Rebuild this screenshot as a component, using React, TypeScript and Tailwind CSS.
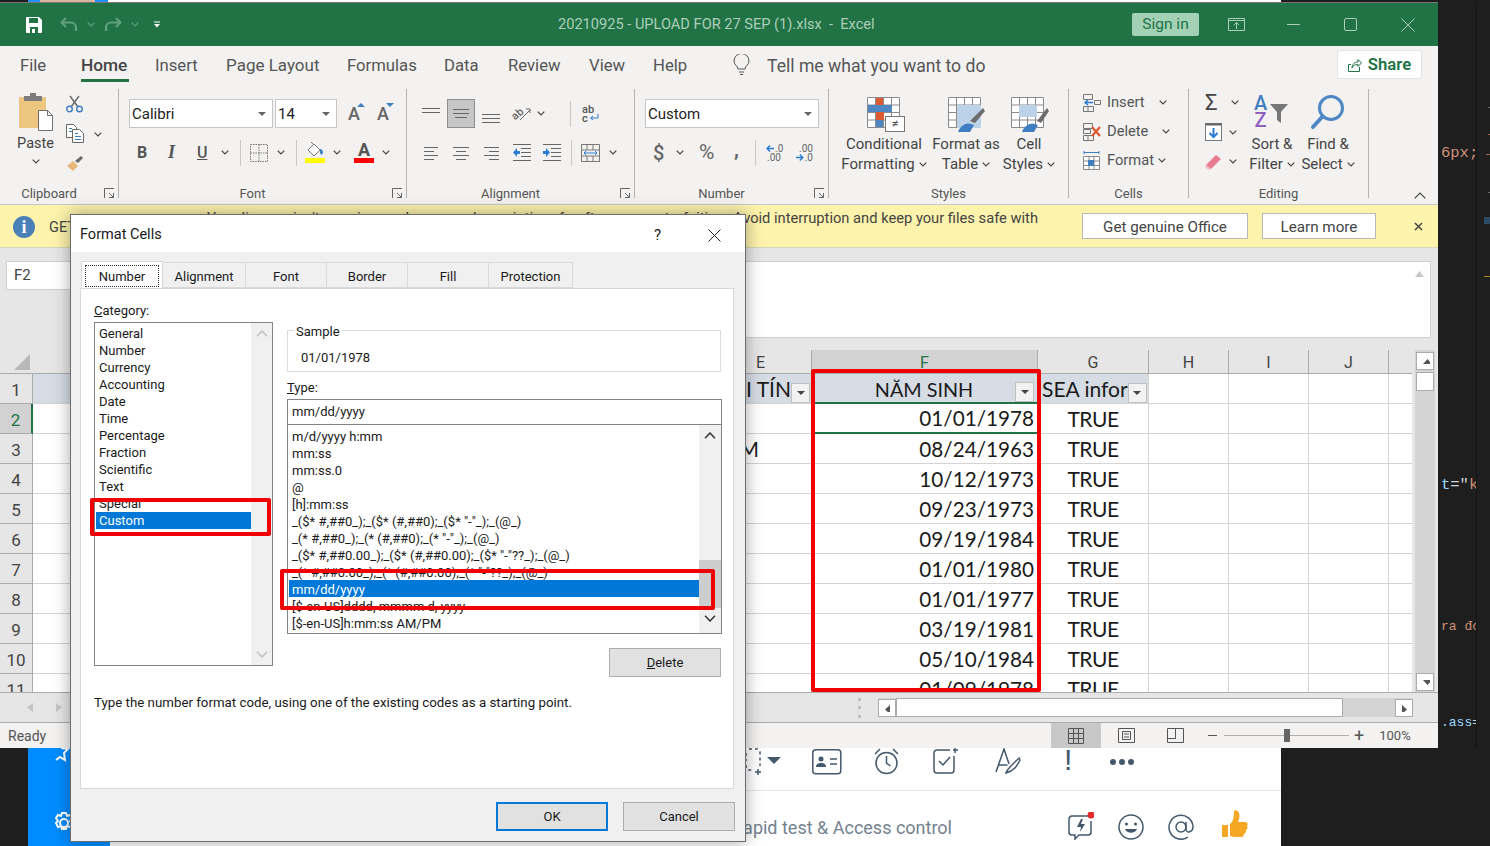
import type { ReactNode } from "react";

const categories = ["General", "Number", "Currency", "Accounting", "Date", "Time", "Percentage", "Fraction", "Scientific", "Text", "Special", "Custom"];

const formats = [
	"m/d/yyyy h:mm",
	"mm:ss",
	"mm:ss.0",
	"@",
	"[h]:mm:ss",
	'_($* #,##0_);_($* (#,##0);_($* "-"_);_(@_)',
	'_(* #,##0_);_(* (#,##0);_(* "-"_);_(@_)',
	'_($* #,##0.00_);_($* (#,##0.00);_($* "-"??_);_(@_)',
	'_(* #,##0.00_);_(* (#,##0.00);_(* "-"??_);_(@_)',
	"mm/dd/yyyy",
	"[$-en-US]dddd, mmmm d, yyyy",
	"[$-en-US]h:mm:ss AM/PM",
];

const dates = ["01/01/1978", "08/24/1963", "10/12/1973", "09/23/1973", "09/19/1984", "01/01/1980", "01/01/1977", "03/19/1981", "05/10/1984", "01/09/1978"];

function Chev(props: { className?: string; color?: string }) {
	return (
		<svg width="8" height="5" viewBox="0 0 8 5" className={`shrink-0 ${props.className ?? ""}`}>
			<path d="M.7.7 4 4 7.3.7" fill="none" stroke={props.color ?? "#444"} strokeWidth="1.2" />
		</svg>
	);
}

function Caret() {
	return (
		<svg width="8" height="4" viewBox="0 0 8 4" className="shrink-0">
			<path d="M0 0h8L4 4z" fill="#666" />
		</svg>
	);
}

function Launcher() {
	return (
		<svg width="11" height="11" viewBox="0 0 11 11" className="absolute right-[3px] top-[5px]">
			<path d="M.5 10V.5H10M5 5l4.500 4.500M9.500 5v4.500H5" fill="none" stroke="#666" />
		</svg>
	);
}

function Sep() {
	return <div className="mt-px h-[109px] w-px shrink-0 bg-[#b4b4b4]" />;
}

function MiniSep(props: { className?: string }) {
	return <div className={`h-[26px] w-px shrink-0 bg-[#c8c8c8] ${props.className ?? ""}`} />;
}

function Group(props: { width: string; label: string; launcher?: boolean; children: ReactNode }) {
	return (
		<div className={`flex shrink-0 flex-col ${props.width}`}>
			<div className="h-[95px]">{props.children}</div>
			<div className={`relative flex h-[21px] items-center justify-center text-[13px] text-[#555] ${props.launcher ? "pr-[20px]" : ""}`}>
				{props.label}
				{props.launcher ? <Launcher /> : null}
			</div>
		</div>
	);
}

function Lines(props: { rows: [number, number, number][]; w?: number; h?: number; color?: string }) {
	return (
		<svg width={props.w ?? 18} height={props.h ?? 18} className="shrink-0">
			{props.rows.map(([x1, x2, y]) => (
				<path key={`${x1}${y}`} d={`M${x1} ${y + 0.5}H${x2}`} stroke={props.color ?? "#666"} />
			))}
		</svg>
	);
}

function Select(props: { text: string; width: string; className?: string }) {
	return (
		<div className={`flex h-[29px] items-center justify-between border border-[#c6c6c6] bg-white pl-[2px] pr-[6px] text-[15px] text-[#222] ${props.width} ${props.className ?? ""}`}>
			<span className="pt-px">{props.text}</span>
			<Caret />
		</div>
	);
}

function Indent(props: { flip?: boolean }) {
	return (
		<svg width="18" height="17" viewBox="0 0 18 17" className="shrink-0">
			<path d="M0 .5h18M8 4.500h10M8 8.500h10M8 12.500h10M0 16.500h18" stroke="#666" />
			<path d={props.flip ? "M0 7h3V4l4 4.500-4 4.500v-3H0z" : "M7 7H4V4L0 8.500 4 13v-3h3z"} fill="#2b7cd3" />
		</svg>
	);
}

function GridIcon(props: { children?: ReactNode; width: number; height: number; className?: string }) {
	return (
		<svg width={props.width} height={props.height} viewBox={`0 0 ${props.width} ${props.height}`} className={`shrink-0 ${props.className ?? ""}`}>
			{props.children}
		</svg>
	);
}

function Clipboard() {
	return (
		<Group width="w-[118px]" label="Clipboard" launcher>
			<div className="flex">
				<div className="ml-[18px] flex w-[35px] flex-col items-center">
					<svg width="36" height="40" viewBox="0 0 36 40" className="mt-[4px] shrink-0">
						<rect x="1" y="5" width="27" height="31" fill="#edc67f" />
						<path d="M6 9V4h6V1h6v3h6v5z" fill="#7d7d7d" />
						<path d="M20.500 18.500h9l5 5v15h-14z" fill="#fff" stroke="#707070" />
						<path d="M29.500 18.500v5h5" fill="none" stroke="#707070" />
					</svg>
					<span className="mt-[2px] h-[20px] text-[14.5px] leading-[20px] text-[#444]">Paste</span>
					<Chev className="mt-[5px]" />
				</div>
				<div className="ml-[13px] flex flex-col">
					<svg width="17" height="18" viewBox="0 0 17 18" className="mt-[7px]">
						<path d="M4 1l8 11M13 1 5 12" stroke="#666" strokeWidth="1.4" />
						<circle cx="3.500" cy="14" r="2.800" fill="none" stroke="#3f7fc1" strokeWidth="1.4" />
						<circle cx="13.500" cy="14" r="2.800" fill="none" stroke="#3f7fc1" strokeWidth="1.4" />
					</svg>
					<div className="mt-[11px] flex items-center">
						<svg width="18" height="19" viewBox="0 0 18 19">
							<path d="M.5.5h7l3 3v10H.5z" fill="#fff" stroke="#666" />
							<path d="M6.500 5.500h7l4 4v9h-11z" fill="#fff" stroke="#666" />
							<path d="M9 9.500h3M9 12.500h6M9 15.500h6M3 4.500h3M3 7.500h3" stroke="#3f7fc1" />
						</svg>
						<Chev className="ml-[10px] mt-[1px]" />
					</div>
					<svg width="18" height="17" viewBox="0 0 18 17" className="mt-[12px]">
						<path d="M1 11l6-5 5 5-5 5z" fill="#e9b878" />
						<path d="M9 6l6-5 2 2-5 5z" fill="#6b6b6b" />
					</svg>
				</div>
			</div>
		</Group>
	);
}

function FontGroup() {
	return (
		<Group width="w-[287px]" label="Font" launcher>
			<div className="ml-[10px] mt-[11px] flex items-center">
				<Select text="Calibri" width="w-[144px]" />
				<Select text="14" width="w-[62px]" className="ml-[2px]" />
				<span className="relative ml-[11px] w-[14px] text-[18px] font-medium leading-none text-[#666]">
					A<span className="absolute right-[-3px] top-[-2px] h-0 w-0 border-x-[4px] border-b-[4px] border-x-transparent border-b-[#3f7fc1]" />
				</span>
				<span className="relative ml-[15px] w-[14px] text-[18px] font-medium leading-none text-[#666]">
					A<span className="absolute right-[-3px] top-[-2px] h-0 w-0 border-x-[4px] border-t-[4px] border-x-transparent border-t-[#3f7fc1]" />
				</span>
			</div>
			<div className="mt-[12px] flex h-[25px] items-center text-[#555]">
				<span className="ml-[18px] w-[10px] text-[16px] font-bold">B</span>
				<span className="ml-[21px] w-[10px] font-['Liberation_Serif',serif] text-[18px] font-bold italic">I</span>
				<span className="ml-[19px] w-[11px] text-[16px] font-medium underline">U</span>
				<Chev className="ml-[13px]" />
				<MiniSep className="ml-[11px]" />
				<svg width="18" height="18" viewBox="0 0 18 18" className="ml-[9px] shrink-0">
					<path d="M.5.5h17v17H.5zM9 .5v17M.5 9h17" fill="none" stroke="#777" strokeDasharray="1.500 1" />
				</svg>
				<Chev className="ml-[9px]" />
				<MiniSep className="ml-[11px]" />
				<div className="ml-[8px] flex w-[20px] flex-col items-center">
					<svg width="18" height="16" viewBox="0 0 18 16">
						<path d="M2 8l6-6 6 6-6 6z" fill="#fff" stroke="#777" />
						<path d="M5 0l3 3" stroke="#777" />
						<path d="M14 7c2 0 3 2 3 4l-1.500 2L14 11z" fill="#3f7fc1" />
					</svg>
					<div className="h-[5px] w-[20px] bg-[#ffff00]" />
				</div>
				<Chev className="ml-[8px]" />
				<div className="ml-[13px] flex w-[20px] flex-col items-center">
					<span className="h-[16px] text-[18px] font-bold leading-[16px] text-[#555]">A</span>
					<div className="h-[5px] w-[20px] bg-[#ff0000]" />
				</div>
				<Chev className="ml-[8px]" />
			</div>
		</Group>
	);
}

function Alignment() {
	return (
		<Group width="w-[227px]" label="Alignment" launcher>
			<div className="mt-[11px] flex h-[29px] items-center">
				<div className="ml-[15px]">
					<Lines rows={[[0, 18, 3], [0, 18, 7]]} h={18} />
				</div>
				<div className="ml-[7px] flex h-[29px] w-[28px] items-center justify-center border border-[#8f8f8f] bg-[#c6c6c6]">
					<Lines rows={[[1, 17, 4], [1, 17, 8], [3, 15, 12]]} />
				</div>
				<div className="ml-[7px] mt-[6px]">
					<Lines rows={[[0, 18, 6], [0, 18, 10], [0, 18, 14]]} />
				</div>
				<svg width="19" height="17" viewBox="0 0 19 17" className="ml-[12px] shrink-0">
					<text x="0" y="13" fontSize="11" fontWeight="500" fill="#666" transform="rotate(-40 5 10)">ab</text>
					<path d="M8 15 18 5M14 4h4v4" fill="none" stroke="#666" />
				</svg>
				<Chev className="ml-[6px]" />
				<MiniSep className="ml-[25px]" />
				<div className="ml-[11px] flex w-[18px] flex-col text-[11px] font-medium leading-[9px] text-[#555]">
					<span>ab</span>
					<span className="flex items-center">
						c
						<svg width="10" height="8" viewBox="0 0 10 8" className="ml-[1px]">
							<path d="M9 0v4H2M4 2 1.500 4 4 6" fill="none" stroke="#2b7cd3" />
						</svg>
					</span>
				</div>
			</div>
			<div className="mt-[12px] flex h-[25px] items-center">
				<div className="ml-[17px] w-[14px]">
					<Lines rows={[[0, 14, 2], [0, 10, 6], [0, 14, 10], [0, 10, 14]]} w={14} h={16} />
				</div>
				<div className="ml-[15px] w-[16px]">
					<Lines rows={[[0, 16, 2], [3, 13, 6], [0, 16, 10], [3, 13, 14]]} w={16} h={16} />
				</div>
				<div className="ml-[15px] w-[15px]">
					<Lines rows={[[0, 15, 2], [5, 15, 6], [0, 15, 10], [5, 15, 14]]} w={15} h={16} />
				</div>
				<div className="ml-[14px]">
					<Indent />
				</div>
				<div className="ml-[12px]">
					<Indent flip />
				</div>
				<MiniSep className="ml-[10px]" />
				<svg width="19" height="18" viewBox="0 0 19 18" className="ml-[9px] shrink-0">
					<path d="M.5.5h18v17H.5zM.5 6h18M.5 12h18M6 .5V6M12 .5V6M6 12v5.500M12 12v5.500" fill="none" stroke="#777" />
					<path d="M3 9h13M5 7 3 9l2 2M14 7l2 2-2 2" fill="none" stroke="#2b7cd3" />
				</svg>
				<Chev className="ml-[9px]" />
			</div>
		</Group>
	);
}

function NumberGroup() {
	return (
		<Group width="w-[193px]" label="Number" launcher>
			<Select text="Custom" width="w-[174px]" className="ml-[10px] mt-[11px]" />
			<div className="mt-[12px] flex h-[25px] items-center text-[#666]">
				<span className="ml-[18px] w-[12px] text-[20px] font-medium leading-none">$</span>
				<Chev className="ml-[11px]" />
				<span className="ml-[15px] w-[17px] text-[21px] leading-none">%</span>
				<span className="ml-[18px] mt-[-8px] w-[7px] text-[20px] font-bold leading-[14px]">,</span>
				<MiniSep className="ml-[14px]" />
				<div className="ml-[10px] w-[19px] text-[10px] leading-[9px]">
					<div className="flex items-center">
						<svg width="9" height="7" viewBox="0 0 9 7">
							<path d="M8 3.500H1M4 .5 1 3.500l3 3" fill="none" stroke="#2b7cd3" strokeWidth="1.500" />
						</svg>
						<span>.0</span>
					</div>
					<div className="pl-[1px]">.00</div>
				</div>
				<div className="ml-[11px] w-[17px] text-[10px] leading-[9px]">
					<div className="pl-[3px]">.00</div>
					<div className="flex items-center">
						<svg width="9" height="7" viewBox="0 0 9 7">
							<path d="M0 3.500h7M4 .5l3 3-3 3" fill="none" stroke="#2b7cd3" strokeWidth="1.500" />
						</svg>
						<span>.0</span>
					</div>
				</div>
			</div>
		</Group>
	);
}

function BigLabel(props: { top: string; bottom: string; className?: string; children: ReactNode }) {
	return (
		<div className={`flex flex-col items-center text-[15px] leading-[20px] text-[#444] ${props.className ?? ""}`}>
			<div className="flex h-[46px] items-start justify-center pt-[9px]">{props.children}</div>
			<span>{props.top}</span>
			<span className="flex items-center gap-[4px] whitespace-nowrap">
				{props.bottom}
				<Chev />
			</span>
		</div>
	);
}

function SheetGrid() {
	return <path d="M.5.5h32v30H.5zM.5 8h32M.5 15.500h32M.5 23h32M8.500.5v30M16.500.5v30M24.500.5v30" fill="#fff" stroke="#8a8a8a" />;
}

function Styles() {
	return (
		<Group width="w-[239px]" label="Styles">
			<div className="ml-[7px] flex">
				<BigLabel top="Conditional" bottom="Formatting" className="w-[96px]">
					<GridIcon width={38} height={36} className="ml-[3px]">
						<SheetGrid />
						<rect x="9" y="1" width="7" height="7" fill="#dc5a32" />
						<rect x="1" y="8" width="24" height="7" fill="#4e87c4" />
						<rect x="9" y="15" width="8" height="8" fill="#dc5a32" />
						<rect x="9" y="23" width="7" height="7" fill="#4e87c4" />
						<rect x="18.500" y="19.500" width="19" height="15" fill="#fff" stroke="#777" />
						<text x="28" y="31" fontSize="13" textAnchor="middle" fill="#444">≠</text>
					</GridIcon>
				</BigLabel>
				<BigLabel top="Format as" bottom="Table" className="w-[68px]">
					<GridIcon width={38} height={36} className="ml-[2px]">
						<SheetGrid />
						<rect x="9" y="8" width="24" height="23" fill="#bcd2e8" />
						<path d="M22 24 35 11l2 3-10 12z" fill="#6d6d6d" />
						<path d="M10 35c2-6 8-10 13-8l3 1-4 7z" fill="#3f7fc1" />
					</GridIcon>
				</BigLabel>
				<BigLabel top="Cell" bottom="Styles" className="w-[58px]">
					<GridIcon width={38} height={36} className="ml-[1px]">
						<SheetGrid />
						<rect x="8" y="8" width="18" height="12" fill="#bcd2e8" />
						<path d="M26 24 36 11l2 3-8 12z" fill="#6d6d6d" />
						<path d="M11 35c2-6 8-10 13-8l3 1-4 7z" fill="#3f7fc1" />
					</GridIcon>
				</BigLabel>
			</div>
		</Group>
	);
}

function CellRow(props: { label: string; chevGap: string; icon: ReactNode }) {
	return (
		<div className="flex h-[29px] items-center pl-[14px] text-[14.7px] text-[#555]">
			{props.icon}
			<span className="ml-[6px]">{props.label}</span>
			<Chev className={props.chevGap} />
		</div>
	);
}

function Cells() {
	return (
		<Group width="w-[119px]" label="Cells">
			<CellRow
				label="Insert"
				chevGap="ml-[14px]"
				icon={
					<svg width="18" height="18" viewBox="0 0 18 18">
						<path d="M.5.5h9v5h-9zM.5 12.500h10v5H.5zM5 12.500v5M11.500 6.500h6v4h-6z" fill="none" stroke="#777" />
						<path d="M10 8.500H2M5 6 2 8.500 5 11" fill="none" stroke="#2b7cd3" strokeWidth="1.500" />
					</svg>
				}
			/>
			<CellRow
				label="Delete"
				chevGap="ml-[14px]"
				icon={
					<svg width="18" height="18" viewBox="0 0 18 18">
						<path d="M.5.5h9v5h-9zM.5 12.500h10v5H.5zM5 12.500v5M.5 6.500h7v4h-7z" fill="none" stroke="#777" />
						<path d="m9 4 8 9M17 4 9 13" stroke="#e0512a" strokeWidth="2" />
					</svg>
				}
			/>
			<CellRow
				label="Format"
				chevGap="ml-[4px]"
				icon={
					<svg width="18" height="20" viewBox="0 0 18 20">
						<path d="M1 1.500h15M1 0v3M16 0v3" stroke="#3f7fc1" />
						<path d="M.5 5.500h16v13H.5zM.5 10h16M.5 14.500h16M6 5.500v13M11 5.500v13" fill="#fff" stroke="#888" />
						<rect x="5" y="9" width="6" height="6" fill="#3f7fc1" />
					</svg>
				}
			/>
		</Group>
	);
}

function Editing() {
	return (
		<Group width="w-[179px]" label="Editing">
			<div className="flex">
				<div className="flex w-[60px] flex-col pl-[16px]">
					<div className="flex h-[29px] items-center">
						<span className="w-[17px] text-[22px] leading-none text-[#444]">Σ</span>
						<Chev className="ml-[9px]" />
					</div>
					<div className="flex h-[30px] items-center">
						<svg width="17" height="18" viewBox="0 0 17 18">
							<rect x=".5" y=".5" width="16" height="17" fill="#fff" stroke="#777" />
							<path d="M.5 1.500h16" stroke="#666" strokeWidth="2" />
							<path d="M8.500 5v9M4.500 10l4 4 4-4" fill="none" stroke="#2b7cd3" strokeWidth="2" />
						</svg>
						<Chev className="ml-[7px]" />
					</div>
					<div className="flex h-[29px] items-center">
						<svg width="17" height="16" viewBox="0 0 17 16">
							<path d="M1 11 11 1l5 4-10 10z" fill="#e97c92" />
							<path d="M1 11l5 4-2 1-4-3z" fill="#f3b7c3" />
						</svg>
						<Chev className="ml-[7px]" />
					</div>
				</div>
				<div className="w-[46px]">
					<BigLabel top="Sort &" bottom="Filter" className="w-[46px]">
						<svg width="36" height="33" viewBox="0 0 36 33" className="mt-[-2px]">
							<text x="6.500" y="15" fontSize="20" fontWeight="500" textAnchor="middle" fill="#3f7fc1">A</text>
							<text x="6.500" y="32" fontSize="20" fontWeight="500" textAnchor="middle" fill="#8f5fc0">Z</text>
							<path d="M16 9h18l-7 8v11l-4-3v-8z" fill="#777" />
						</svg>
					</BigLabel>
				</div>
				<div className="ml-[5px] w-[56px]">
					<BigLabel top="Find &" bottom="Select" className="w-[56px]">
						<svg width="36" height="36" viewBox="0 0 36 36" className="mt-[-3px]">
							<circle cx="21" cy="14" r="11.500" fill="none" stroke="#4e87c4" strokeWidth="3" />
							<path d="M12 23 3 33" stroke="#4e87c4" strokeWidth="4" strokeLinecap="round" />
						</svg>
					</BigLabel>
				</div>
			</div>
		</Group>
	);
}

function TitleBar() {
	return (
		<div className="flex h-[43px] shrink-0 items-center bg-[#217346]">
			<svg width="16" height="16" viewBox="0 0 16 16" className="ml-[26px] shrink-0">
				<path d="M1 0h12l3 3v12a1 1 0 0 1-1 1H1a1 1 0 0 1-1-1V1a1 1 0 0 1 1-1z" fill="#fff" />
				<path d="M3 1h9v5H3zM4 10h8v6H4z" fill="#217346" />
				<rect x="6" y="12" width="3" height="4" fill="#fff" />
			</svg>
			<svg width="18" height="15" viewBox="0 0 18 15" className="ml-[18px] shrink-0">
				<path d="M6 1 1.500 5.500 6 10M2 5.500h9a5 5 0 0 1 5 5V14" fill="none" stroke="#5f9f7d" strokeWidth="2.200" />
			</svg>
			<Chev className="ml-[9px]" color="#5f9f7d" />
			<svg width="18" height="15" viewBox="0 0 18 15" className="ml-[9px] shrink-0">
				<path d="M12 1l4.500 4.500L12 10M16 5.500H7a5 5 0 0 0-5 5V14" fill="none" stroke="#5f9f7d" strokeWidth="2.200" />
			</svg>
			<Chev className="ml-[9px]" color="#5f9f7d" />
			<svg width="6" height="7" viewBox="0 0 6 7" className="ml-[15px] shrink-0">
				<path d="M0 1h6" stroke="#fff" />
				<path d="M0 3h6L3 6.500z" fill="#fff" />
			</svg>
			<span className="ml-[398px] w-[574px] whitespace-pre text-[14.6px] text-[#a9cfb8]">20210925 - UPLOAD FOR 27 SEP (1).xlsx  -  Excel</span>
			<div className="flex h-[23px] w-[67px] items-center justify-center rounded-[2px] bg-[#a3d1b5] text-[15.5px] text-[#217346]">Sign in</div>
			<svg width="17" height="13" viewBox="0 0 17 13" className="ml-[29px] shrink-0">
				<path d="M.5.5h16v12H.5zM.5 2.500h16M8.500 11V5M6 7l2.500-2.500L11 7" fill="none" stroke="#a9cfb8" />
			</svg>
			<div className="ml-[42px] h-px w-[13px] bg-[#a9cfb8]" />
			<div className="ml-[44px] h-[13px] w-[13px] rounded-[2px] border border-[#a9cfb8]" />
			<svg width="14" height="14" viewBox="0 0 14 14" className="ml-[44px] shrink-0">
				<path d="m.5.5 13 13M13.500.5l-13 13" stroke="#a9cfb8" />
			</svg>
		</div>
	);
}

function TabRow() {
	return (
		<div className="flex h-[42px] shrink-0 items-start bg-[#f3f2f1] pt-[7px] text-[16.7px] text-[#555]">
			<span className="ml-[20px] w-[61px]">File</span>
			<span className="flex w-[74px] flex-col">
				<span className="w-[48px] whitespace-nowrap text-[17.3px] font-medium text-[#444]">Home</span>
				<span className="h-[3px] w-[48px] bg-[#217346]" />
			</span>
			<span className="w-[71px]">Insert</span>
			<span className="w-[121px] text-[17px]">Page Layout</span>
			<span className="w-[97px]">Formulas</span>
			<span className="w-[64px]">Data</span>
			<span className="w-[81px]">Review</span>
			<span className="w-[64px]">View</span>
			<span className="w-[80px]">Help</span>
			<svg width="17" height="22" viewBox="0 0 17 22" className="mt-[1px] shrink-0">
				<path d="M5 15c0-3-4-4-4-8a7.500 7.500 0 0 1 15 0c0 4-4 5-4 8zM6 18h5M7 20.500h3" fill="none" stroke="#555" />
			</svg>
			<span className="ml-[17px] w-[570px] text-[17.6px]">Tell me what you want to do</span>
			<div className="mt-[-3px] flex h-[29px] w-[85px] items-center justify-center gap-[6px] rounded-[2px] border border-[#e4e4e4] bg-white font-semibold text-[#217346]">
				<svg width="14" height="14" viewBox="0 0 14 14">
					<path d="M3 6.500H.5v7h11V9M4 10c0-4 3-6 6-6V1.500L13.500 5 10 8.500V6.500c-3 0-5 1-6 3.500z" fill="none" stroke="#217346" />
				</svg>
				Share
			</div>
		</div>
	);
}

function Ribbon() {
	return (
		<div className="flex h-[117px] shrink-0 border-b border-[#c8c8c8] bg-[#f3f2f1]">
			<Clipboard />
			<Sep />
			<FontGroup />
			<Sep />
			<Alignment />
			<Sep />
			<NumberGroup />
			<Sep />
			<Styles />
			<Sep />
			<Cells />
			<Sep />
			<Editing />
			<Sep />
			<svg width="12" height="7" viewBox="0 0 12 7" className="ml-[45px] mt-[104px] shrink-0">
				<path d="M.7 6.300 6 1l5.300 5.300" fill="none" stroke="#444" strokeWidth="1.200" />
			</svg>
		</div>
	);
}

function Banner() {
	return (
		<div className="flex h-[43px] shrink-0 items-start border-b border-[#d8d8b8] bg-[#fdf3ac] text-[15.2px] text-[#444]">
			<div className="ml-[13px] mt-[11px] flex h-[22px] w-[22px] shrink-0 items-center justify-center rounded-full bg-[#4a80b8] font-['Liberation_Serif',serif] text-[18px] font-bold text-white">i</div>
			<span className="ml-[14px] mt-[12px] w-[158px] shrink-0 text-[14.5px]">GET GENUINE OFFICE</span>
			<div className="mt-[2px] flex w-[831px] shrink-0 items-baseline justify-between whitespace-nowrap">
				<span>Your license isn't genuine, and you may be a victim of software counterfeiting. A</span>
				<span className="text-[14.7px]">void interruption and keep your files safe with</span>
			</div>
			<div className="ml-[44px] mt-[8px] flex h-[26px] w-[166px] shrink-0 items-center justify-center border border-[#b8b8b8] bg-white pt-[2px]">Get genuine Office</div>
			<div className="ml-[14px] mt-[8px] flex h-[26px] w-[114px] shrink-0 items-center justify-center border border-[#b8b8b8] bg-white pt-[2px]">Learn more</div>
			<svg width="9" height="9" viewBox="0 0 9 9" className="ml-[38px] mt-[17px] shrink-0">
				<path d="m1 1 7 7M8 1 1 8" stroke="#444" strokeWidth="1.500" />
			</svg>
		</div>
	);
}

function FormulaArea() {
	return (
		<div className="flex h-[102px] shrink-0 items-start bg-[#e6e6e6] pt-[13px]">
			<div className="ml-[6px] flex h-[29px] w-[200px] items-center border border-[#d0d0d0] bg-white pl-[7px] text-[15px] text-[#444]">F2</div>
			<div className="ml-[8px] flex h-[77px] w-[1217px] justify-end border border-[#d0d0d0] bg-white pr-[6px] pt-[9px]">
				<svg width="9" height="6" viewBox="0 0 9 6">
					<path d="M0 6 4.500 0 9 6z" fill="#c8c8c8" />
				</svg>
			</div>
		</div>
	);
}

function ColHeaders() {
	const cols: [string, string, string][] = [
		["E", "w-[102px]", ""],
		["F", "w-[226px]", "bg-[#d2d2d2] text-[#217346]"],
		["G", "w-[111px]", ""],
		["H", "w-[80px]", ""],
		["I", "w-[80px]", ""],
		["J", "w-[80px]", ""],
	];
	return (
		<div className="flex h-[24px] shrink-0 bg-[#e6e6e6]">
			<div className="flex h-[24px] w-[33px] items-end justify-end border-b border-[#ababab] pb-[3px] pr-[3px]">
				<div className="h-0 w-0 border-b-[16px] border-l-[16px] border-b-[#b8b8b8] border-l-transparent" />
			</div>
			<div className="w-[677px] border-b border-[#ababab]" />
			{cols.map(([name, width, extra]) => (
				<div key={name} className={`flex items-center justify-center border-b border-r border-[#ababab] pt-[3px] text-[16px] text-[#444] ${width} ${extra}`}>
					{name}
				</div>
			))}
			<div className="flex-1 border-b border-[#ababab]" />
		</div>
	);
}

function FilterBtn() {
	return (
		<div className="flex h-[20px] w-[19px] shrink-0 items-center justify-center self-end border border-[#c0c0c0] bg-[#f2f2f2]">
			<div className="h-0 w-0 border-x-[4px] border-t-[4px] border-x-transparent border-t-[#444]" />
		</div>
	);
}

function Rows() {
	const line = "border-b border-r border-[#d4d4d4]";
	return (
		<div className="h-[318px] w-full shrink-0 overflow-hidden bg-white font-['Lato',sans-serif] text-[#1a1a1a]">
			{Array.from({ length: 11 }, (_, i) => i + 1).map((n) => {
				const header = n === 1;
				const cellBg = header ? "bg-[#d6dce4]" : "";
				const date = dates[n - 2];
				const fBorder = n === 1 || n === 2 ? "border-b-2 border-b-[#217346]" : "";
				return (
					<div key={n} className="flex h-[30px]">
						<div className={`flex w-[33px] shrink-0 items-center justify-center border-b border-r border-[#ababab] pt-[5px] font-['Roboto',sans-serif] text-[17px] ${n === 2 ? "border-r-2 border-r-[#217346] bg-[#d2d2d2] text-[#217346]" : "bg-[#e6e6e6] text-[#444]"}`}>
							{n}
						</div>
						<div className={`w-[677px] shrink-0 ${line} ${cellBg}`} />
						<div className={`flex w-[102px] shrink-0 items-center justify-end overflow-hidden whitespace-nowrap pt-[1px] text-[21px] ${line} ${cellBg}`}>
							{header ? (
								<span className="flex h-full items-center">
									NGƯỜI TÍN
									<FilterBtn />
									<span className="w-px" />
								</span>
							) : n === 3 ? (
								<span className="pr-[52px]">TPHCM</span>
							) : null}
						</div>
						<div className={`flex w-[226px] shrink-0 items-center justify-end pr-[3px] pt-[2px] text-[20.7px] ${line} ${cellBg} ${fBorder}`}>
							{header ? (
								<>
									<span className="flex-1 whitespace-nowrap pl-[21px] pt-px text-center text-[19.800px]">NĂM SINH</span>
									<FilterBtn />
								</>
							) : (
								date
							)}
						</div>
						<div className={`flex w-[111px] shrink-0 items-center pt-px text-[21px] ${line} ${cellBg} ${header ? "" : "justify-center text-[20px] tracking-[-0.5px]"}`}>
							{header ? (
								<>
									<span className="whitespace-nowrap pl-[4px]">SEA infor</span>
									<FilterBtn />
								</>
							) : (
								"TRUE"
							)}
						</div>
						<div className={`w-[80px] shrink-0 ${line}`} />
						<div className={`w-[80px] shrink-0 ${line}`} />
						<div className={`w-[80px] shrink-0 ${line}`} />
						<div className="flex-1 border-b border-[#d4d4d4]" />
					</div>
				);
			})}
		</div>
	);
}

function ScrollBtn(props: { dir: "up" | "down" | "left" | "right"; className?: string }) {
	const d = { up: "M0 5 4.500 0 9 5z", down: "M0 0l4.500 5L9 0z", left: "M5 0 0 4.500 5 9z", right: "M0 0l5 4.500L0 9z" }[props.dir];
	return (
		<div className={`flex h-[18px] w-[18px] shrink-0 items-center justify-center border border-[#ababab] bg-white ${props.className ?? ""}`}>
			<svg width="9" height="9" viewBox="0 0 9 9">
				<path d={d} fill="#555" transform="translate(2 2)" />
			</svg>
		</div>
	);
}

function HScroll() {
	return (
		<div className="flex h-[30px] shrink-0 items-center border-t border-[#ababab] bg-[#e6e6e6]">
			<svg width="6" height="9" viewBox="0 0 6 9" className="ml-[27px] shrink-0">
				<path d="M6 0 0 4.500 6 9z" fill="#c4c4c4" />
			</svg>
			<svg width="6" height="9" viewBox="0 0 6 9" className="ml-[23px] shrink-0">
				<path d="M0 0l6 4.500L0 9z" fill="#c4c4c4" />
			</svg>
			<div className="ml-[796px] flex h-[20px] w-[3px] flex-col justify-between">
				<div className="h-[3px] bg-[#bdbdbd]" />
				<div className="h-[3px] bg-[#bdbdbd]" />
				<div className="h-[3px] bg-[#bdbdbd]" />
			</div>
			<div className="ml-[17px] flex h-[19px] w-[535px] items-center bg-[#d4d4d4]">
				<ScrollBtn dir="left" />
				<div className="h-[19px] w-[447px] border border-[#ababab] bg-white" />
				<div className="w-[52px]" />
				<ScrollBtn dir="right" />
			</div>
		</div>
	);
}

function StatusBar() {
	return (
		<div className="flex h-[26px] shrink-0 items-center border-t border-[#ababab] bg-[#f3f2f1] text-[14px] text-[#555]">
			<span className="ml-[8px] w-[1043px] pt-px">Ready</span>
			<div className="flex h-[25px] w-[50px] items-center justify-center bg-[#c8c8c8]">
				<svg width="16" height="16" viewBox="0 0 16 16">
					<path d="M.5.5h15v15H.5zM5.500.5v15M10.500.5v15M.5 5.500h15M.5 10.500h15" fill="none" stroke="#555" />
				</svg>
			</div>
			<svg width="17" height="15" viewBox="0 0 17 15" className="ml-[17px] shrink-0">
				<path d="M.5.5h16v14H.5zM4.500 3.500h8v8h-8zM6 6h5M6 9h5" fill="none" stroke="#555" />
			</svg>
			<svg width="17" height="15" viewBox="0 0 17 15" className="ml-[32px] shrink-0">
				<path d="M.5.5h16v14H.5zM.5 10.500h8V.5M8.500 .5v10" fill="none" stroke="#555" />
			</svg>
			<div className="ml-[24px] h-px w-[9px] bg-[#555]" />
			<div className="relative ml-[7px] flex h-[13px] w-[125px] items-center pl-[60px]">
				<div className="absolute left-0 h-px w-[125px] bg-[#b0b0b0]" />
				<div className="relative h-[13px] w-[6px] bg-[#666]" />
			</div>
			<span className="ml-[5px] text-[18px] leading-none">+</span>
			<span className="ml-[15px] text-[13px]">100%</span>
		</div>
	);
}

function VScroll() {
	return (
		<div className="flex w-[26px] shrink-0 bg-[#e6e6e6] pl-[3px]">
			<div className="flex h-[342px] w-[20px] flex-col items-center bg-[#d4d4d4] pt-[2px]">
				<ScrollBtn dir="up" />
				<div className="mt-[2px] h-[19px] w-[18px] border border-[#ababab] bg-white" />
				<div className="flex-1" />
				<ScrollBtn dir="down" className="mb-[1px]" />
			</div>
		</div>
	);
}

function ExcelWindow() {
	return (
		<div className="flex h-[746px] w-[1438px] shrink-0 flex-col border-t border-[#777]">
			<TitleBar />
			<TabRow />
			<Ribbon />
			<Banner />
			<FormulaArea />
			<div className="flex h-[342px] shrink-0 flex-row">
				<div className="flex w-[1412px] shrink-0 flex-col">
					<ColHeaders />
					<Rows />
				</div>
				<VScroll />
			</div>
			<HScroll />
			<StatusBar />
		</div>
	);
}

function CodeColumn() {
	return (
		<div className="flex w-[38px] shrink-0 flex-col overflow-hidden whitespace-pre pl-[3px] font-['Liberation_Mono',monospace] text-[15.5px] leading-[20px]">
			<span className="mt-[141px] h-[20px] text-[#ce9178]">6px;</span>
			<span className="mt-[312px] h-[20px] text-[#d4d4d4]">
				<span className="text-[#9cdcfe]">t</span>="<span className="text-[#ce9178]">k</span>
			</span>
			<span className="mt-[122px] h-[20px] text-[13px] text-[#ce9178]">ra đc</span>
			<span className="mt-[76px] h-[20px] text-[13px] text-[#d4d4d4]">
				<span className="text-[#9cdcfe]">.ass</span>=
			</span>
		</div>
	);
}

function Minimap() {
	return (
		<div className="flex flex-1 flex-col items-end border-l border-[#141414]">
			<div className="mt-[105px] h-px w-[2px] bg-[#6b6b6b]" />
			<div className="mt-[26px] h-px w-[2px] bg-[#a0674a]" />
			<div className="mt-[19px] h-px w-[4px] bg-[#a0674a]" />
			<div className="mt-[37px] h-px w-[2px] bg-[#6b6b6b]" />
			<div className="mt-[24px] h-[7px] w-[6px] bg-[#2c4a66]" />
			<div className="mt-[52px] h-px w-[6px] bg-[#a08a20]" />
		</div>
	);
}

function ChatIcon(props: { className?: string; children: ReactNode; width: number; height: number }) {
	return (
		<svg width={props.width} height={props.height} viewBox={`0 0 ${props.width} ${props.height}`} className={`shrink-0 ${props.className ?? ""}`} fill="none" stroke="#44586c" strokeWidth="1.500">
			{props.children}
		</svg>
	);
}

function ChatBar() {
	return (
		<div className="flex h-[98px] shrink-0">
			<div className="w-[28px] shrink-0 bg-[#1e1e1e]" />
			<div className="flex w-[82px] shrink-0 flex-col bg-[#008cff] pl-[24px]">
				<svg width="20" height="15" viewBox="0 0 20 15">
					<path d="M8 -6 10 0l6 1-4 4 1 7-5-3-4 3" fill="none" stroke="#fff" strokeWidth="2" />
				</svg>
				<svg width="24" height="32" viewBox="0 0 24 24" className="mt-[44px]">
					<path d="M12 8a4 4 0 1 0 0 8 4 4 0 0 0 0-8zM10 2h4l1 3 3-1 2 3-2 3 2 2-2 4-3-1-1 3h-4l-1-3-3 1-2-4 2-2-2-3 2-3 3 1z" fill="none" stroke="#fff" strokeWidth="2" />
				</svg>
			</div>
			<div className="flex w-[1171px] shrink-0 flex-col bg-white">
				<div className="flex h-[43px] shrink-0 items-start border-b border-[#e5e5e5] pl-[635px]">
					<ChatIcon width={17} height={28} className="mt-[-1px]">
						<path d="M4 2h8a3 3 0 0 1 3 3v14M1 6v8M1 18v3a3 3 0 0 0 3 2h5" strokeDasharray="3 3" />
						<path d="M13 22v6M10 25h6" />
					</ChatIcon>
					<div className="ml-[5px] mt-[9px] h-0 w-0 border-x-[7px] border-t-[7px] border-x-transparent border-t-[#44586c]" />
					<ChatIcon width={30} height={26} className="ml-[31px] mt-[1px]">
						<rect x=".8" y=".8" width="28" height="24" rx="3" />
						<circle cx="9" cy="10" r="2.500" fill="#44586c" stroke="none" />
						<path d="M4 18c0-3 2-4 5-4s5 1 5 4z" fill="#44586c" stroke="none" />
						<path d="M18 10h7M18 15h7" />
					</ChatIcon>
					<ChatIcon width={27} height={27} className="ml-[31px]">
						<circle cx="13.500" cy="15" r="10.500" />
						<path d="M13.500 8v7l4 3M2 6l5-5M25 6l-5-5" />
					</ChatIcon>
					<ChatIcon width={26} height={26} className="ml-[33px]">
						<path d="M17 2H4a3 3 0 0 0-3 3v17a3 3 0 0 0 3 3h14a3 3 0 0 0 3-3V8" />
						<path d="m6 13 4 4 7-8M22 0v5M20 2h5" />
					</ChatIcon>
					<ChatIcon width={26} height={26} className="ml-[36px]">
						<path d="M1 24 9 1l5 15" />
						<path d="M3.500 17h9" />
						<path d="M11 25c1-4 4-6 13-15l1 2c-3 6-6 11-14 13z" />
					</ChatIcon>
					<span className="ml-[43px] mt-[-3px] font-['Liberation_Sans',sans-serif] text-[30px] font-light leading-[30px] text-[#44586c]">!</span>
					<div className="ml-[38px] mt-[11px] flex gap-[3px]">
						<div className="h-[6px] w-[6px] rounded-full bg-[#44586c]" />
						<div className="h-[6px] w-[6px] rounded-full bg-[#44586c]" />
						<div className="h-[6px] w-[6px] rounded-full bg-[#44586c]" />
					</div>
				</div>
				<div className="flex items-center pt-[21px]">
					<span className="ml-[622px] w-[336px] shrink-0 pt-[2px] text-[18px] leading-[28px] text-[#74828f]">Rapid test & Access control</span>
					<ChatIcon width={26} height={28} className="mt-[-2px]">
						<path d="M21 4H4a3 3 0 0 0-3 3v13a3 3 0 0 0 3 3h3v4l4-4h9a3 3 0 0 0 3-3V9" />
						<path d="M13 7 9 15h4l-1 5 5-8h-4l2-5z" fill="#44586c" stroke="none" />
						<circle cx="23" cy="3" r="3.500" fill="#e52b2b" stroke="none" />
					</ChatIcon>
					<ChatIcon width={26} height={26} className="ml-[24px]">
						<circle cx="13" cy="13" r="12" />
						<circle cx="8.500" cy="10" r="1.500" fill="#44586c" stroke="none" />
						<circle cx="17.500" cy="10" r="1.500" fill="#44586c" stroke="none" />
						<path d="M7 15c2 5 10 5 12 0z" fill="#44586c" stroke="none" />
					</ChatIcon>
					<ChatIcon width={26} height={26} className="ml-[24px]">
						<circle cx="13" cy="13" r="5" />
						<path d="M18 8v7c0 5 7 3 7-2a12 12 0 1 0-5 10" />
					</ChatIcon>
					<svg width="27" height="29" viewBox="0 0 27 29" className="ml-[27px] mt-[-5px] shrink-0">
						<path d="M1 15h6v12H1zM9 14c3-2 4-7 4-12 0-3 4-2 5 1 1 4 0 6-1 9h7c3 0 3 3 2 4 1 2 0 4-1 4 0 3-1 3-2 4 0 2-1 3-3 3H13c-2 0-3-1-4-1z" fill="#f5a623" />
					</svg>
				</div>
			</div>
			<div className="flex-1 bg-[#1e1e1e]" />
		</div>
	);
}

function DialogTab(props: { label: string; width: string; active?: boolean }) {
	if (props.active) {
		return (
			<div className={`z-10 mt-[-1px] flex h-[27px] items-center justify-center border border-b-0 border-[#d9d9d9] bg-white px-[3px] pt-px ${props.width}`}>
				<span className="flex h-[22px] flex-1 items-center justify-center border border-dotted border-[#333] pt-[2px]">{props.label}</span>
			</div>
		);
	}
	return <div className={`flex h-[26px] items-center justify-center border border-l-0 border-[#d9d9d9] pt-[4px] ${props.width}`}>{props.label}</div>;
}

function ListChevron(props: { up?: boolean; color: string }) {
	return (
		<svg width="12" height="7" viewBox="0 0 12 7">
			<path d={props.up ? "M1 6.300 6 1l5 5.300" : "M1 .7 6 6l5-5.300"} fill="none" stroke={props.color} strokeWidth="1.500" />
		</svg>
	);
}

function FormatCellsDialog() {
	return (
		<div className="absolute left-[70px] top-[214px] flex h-[628px] w-[676px] flex-col border border-[#6d6d6d] bg-[#f0f0f0] text-[13px] text-[#1a1a1a] shadow-[0_0_16px_rgba(0,0,0,0.35)]">
			<div className="flex h-[37px] shrink-0 items-center bg-white pt-[3px]">
				<span className="ml-[9px] w-[574px] text-[14.5px]">Format Cells</span>
				<span className="text-[15px]">?</span>
				<svg width="13" height="13" viewBox="0 0 13 13" className="ml-[47px]">
					<path d="m.5.5 12 12M12.500.5l-12 12" stroke="#222" />
				</svg>
			</div>
			<div className="ml-[10px] mt-[10px] flex shrink-0">
				<DialogTab label="Number" width="w-[82px]" active />
				<DialogTab label="Alignment" width="w-[83px]" />
				<DialogTab label="Font" width="w-[81px]" />
				<DialogTab label="Border" width="w-[81px]" />
				<DialogTab label="Fill" width="w-[81px]" />
				<DialogTab label="Protection" width="w-[84px]" />
			</div>
			<div className="ml-[9px] h-[501px] w-[654px] shrink-0 border border-[#d9d9d9] bg-white">
				<div className="flex h-[390px]">
					<div className="ml-[13px] w-[193px] shrink-0 pt-[14px]">
						<div className="h-[19px] leading-[16px]">
							<span className="underline">C</span>ategory:
						</div>
						<div className="flex h-[344px] w-[179px] border border-[#828282]">
							<div className="w-[156px] shrink-0 pl-[1px] pt-[2px]">
								{categories.map((c) => (
									<div key={c} className={`h-[17px] pl-[3px] leading-[17px] ${c === "Custom" ? "bg-[#0078d7] text-white" : ""}`}>
										{c}
									</div>
								))}
							</div>
							<div className="flex flex-1 flex-col items-center justify-between bg-[#f0f0f0] py-[7px]">
								<ListChevron up color="#c0c0c0" />
								<ListChevron color="#c0c0c0" />
							</div>
						</div>
					</div>
					<div className="w-[434px] shrink-0 pt-[41px]">
						<div className="h-[42px] border border-[#dcdcdc] px-[13px] pt-[19px] leading-[16px]">
							<span className="absolute mt-[-26px] ml-[-7px] bg-white px-[2px]">Sample</span>
							01/01/1978
						</div>
						<div className="mt-[7px] h-[20px] pt-px leading-[16px]">
							<span className="underline">T</span>ype:
						</div>
						<div className="flex h-[26px] w-[435px] items-center border border-[#828282] pl-[4px]">mm/dd/yyyy</div>
						<div className="flex h-[209px] w-[435px] border border-t-0 border-[#828282]">
							<div className="w-[411px] shrink-0 overflow-hidden whitespace-nowrap pl-[1px] pt-[2px]">
								{formats.map((f) => (
									<div key={f} className={`h-[17px] pl-[3px] leading-[19px] ${f === "mm/dd/yyyy" ? "bg-[#0078d7] text-white" : ""}`}>
										{f}
									</div>
								))}
							</div>
							<div className="flex flex-1 flex-col items-center bg-[#f0f0f0] pt-[7px]">
								<ListChevron up color="#333" />
								<div className="mt-[121px] h-[48px] w-full bg-[#cdcdcd]" />
								<div className="mt-[7px]">
									<ListChevron color="#333" />
								</div>
							</div>
						</div>
						<div className="ml-[322px] mt-[14px] flex h-[29px] w-[112px] items-center justify-center border border-[#adadad] bg-[#e1e1e1] pt-px">
							<span>
								<span className="underline">D</span>elete
							</span>
						</div>
					</div>
				</div>
				<div className="ml-[13px] mt-[14px] text-[13.300px]">Type the number format code, using one of the existing codes as a starting point.</div>
			</div>
			<div className="ml-[425px] mt-[13px] flex shrink-0">
				<div className="flex h-[29px] w-[112px] items-center justify-center border-2 border-[#0078d7] bg-[#e1e1e1] pt-px">OK</div>
				<div className="ml-[15px] flex h-[29px] w-[112px] items-center justify-center border border-[#adadad] bg-[#e1e1e1] pt-px">Cancel</div>
			</div>
		</div>
	);
}

export default function App() {
	return (
		<div className="relative h-[846px] w-[1490px] overflow-hidden bg-[#1e1e1e] font-['Roboto',sans-serif]">
			<div className="flex h-[2px]">
				<div className="w-[28px] bg-[#1e1e1e]" />
				<div className="w-[12px] bg-[#1e90ff]" />
				<div className="w-[55px] bg-[#d8b79c]" />
				<div className="w-[13px] bg-[#1e90ff]" />
				<div className="w-[1173px] bg-white" />
			</div>
			<div className="flex h-[746px]">
				<ExcelWindow />
				<CodeColumn />
				<Minimap />
			</div>
			<ChatBar />
			<FormatCellsDialog />
			<div className="absolute left-[90px] top-[498px] h-[38px] w-[181px] rounded-[2px] border-4 border-[#f00000]" />
			<div className="absolute left-[280px] top-[569px] h-[41px] w-[435px] rounded-[2px] border-4 border-[#f00000]" />
			<div className="absolute left-[811px] top-[369px] h-[323px] w-[230px] rounded-[2px] border-4 border-[#f00000]" />
		</div>
	);
}
